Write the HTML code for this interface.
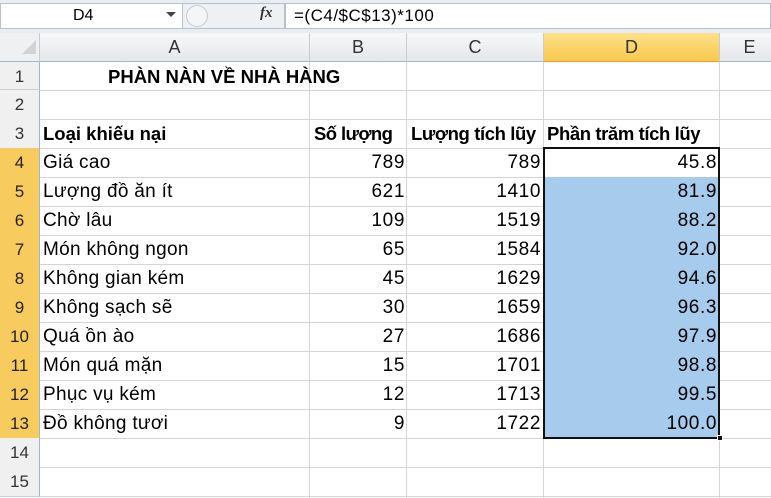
<!DOCTYPE html>
<html><head><meta charset="utf-8"><style>
*{margin:0;padding:0;box-sizing:border-box}
body{width:771px;height:498px;background:#fff;font-family:"Liberation Sans",sans-serif;position:relative;overflow:hidden}
.a{position:absolute}
.hl{position:absolute;left:0;width:771px;height:1px;background:#d4d4d4}
.vl{position:absolute;top:62px;height:436px;width:1px;background:#d4d4d4}
.t{position:absolute;font-size:19px;letter-spacing:0.3px;color:#000;line-height:30px;white-space:nowrap}
.b{font-weight:bold;font-size:18.5px;letter-spacing:0}
.r{text-align:right;letter-spacing:0.6px}
.rh{position:absolute;left:0;width:40px;text-align:center;font-size:17px;line-height:29px;color:#333;background:#f0f0f0;border-right:1px solid #9eb6ce;border-bottom:1px solid #c8d0d8}
.ch{position:absolute;top:33px;height:29px;line-height:28px;text-align:center;font-size:18px;color:#333;background:linear-gradient(#f7f8f9,#e4e7eb);border-right:1px solid #c8ccd1;border-bottom:1px solid #9eb6ce}
</style></head><body>
<div class="a" style="left:0;top:0;width:771px;height:33px;background:#e9ecf0"></div>
<div class="a" style="left:0;top:3px;width:183px;height:26px;background:#fff;border:1px solid #b8c0ca;font-size:16px;line-height:24px;padding-left:72px">D4</div>
<div class="a" style="left:166px;top:12px;width:0;height:0;border-left:5px solid transparent;border-right:5px solid transparent;border-top:5px solid #444"></div>
<div class="a" style="left:183px;top:3px;width:102px;height:26px;background:#eef0f3;border:1px solid #b8c0ca;border-left:none"></div>
<div class="a" style="left:186px;top:5px;width:22px;height:22px;border-radius:11px;border:1px solid #c5cad0;background:#f4f5f6"></div>
<div class="a" style="left:260px;top:5px;font-family:'Liberation Serif',serif;font-style:italic;font-weight:bold;font-size:15px;color:#333">fx</div>
<div class="a" style="left:285px;top:3px;width:486px;height:26px;background:#fff;border:1px solid #b8c0ca;font-size:17px;line-height:24px;padding-left:8px;letter-spacing:0.5px">=(C4/$C$13)*100</div>
<div class="a" style="left:0;top:33px;width:40px;height:29px;background:#eef0f2;border-right:1px solid #c8ccd1;border-bottom:1px solid #9eb6ce"></div>
<div class="a" style="left:22px;top:40px;width:0;height:0;border-left:14px solid transparent;border-bottom:14px solid #d0d4d8"></div>
<div class="ch" style="left:40px;width:270px">A</div>
<div class="ch" style="left:310px;width:97px">B</div>
<div class="ch" style="left:407px;width:137px">C</div>
<div class="ch" style="left:544px;width:176px;background:linear-gradient(#fde18a,#f8c94c);border-bottom-color:#e2a22d">D</div>
<div class="ch" style="left:720px;width:60px">E</div>
<div class="hl" style="top:90px"></div><div class="hl" style="top:119px"></div><div class="hl" style="top:148px"></div><div class="hl" style="top:177px"></div><div class="hl" style="top:206px"></div><div class="hl" style="top:235px"></div><div class="hl" style="top:264px"></div><div class="hl" style="top:293px"></div><div class="hl" style="top:322px"></div><div class="hl" style="top:351px"></div><div class="hl" style="top:380px"></div><div class="hl" style="top:409px"></div><div class="hl" style="top:438px"></div><div class="hl" style="top:467px"></div><div class="hl" style="top:496px"></div>
<div class="vl" style="left:309px"></div><div class="vl" style="left:406px"></div><div class="vl" style="left:543px"></div><div class="vl" style="left:719px"></div>
<div class="rh" style="top:62px;height:28px">1</div><div class="rh" style="top:90px">2</div><div class="rh" style="top:119px">3</div>
<div class="rh" style="top:148px;background:#f8cb5e;color:#222">4</div><div class="rh" style="top:177px;background:#f8cb5e;color:#222">5</div><div class="rh" style="top:206px;background:#f8cb5e;color:#222">6</div><div class="rh" style="top:235px;background:#f8cb5e;color:#222">7</div><div class="rh" style="top:264px;background:#f8cb5e;color:#222">8</div><div class="rh" style="top:293px;background:#f8cb5e;color:#222">9</div><div class="rh" style="top:322px;background:#f8cb5e;color:#222">10</div><div class="rh" style="top:351px;background:#f8cb5e;color:#222">11</div><div class="rh" style="top:380px;background:#f8cb5e;color:#222">12</div><div class="rh" style="top:409px;background:#f8cb5e;color:#222">13</div>
<div class="rh" style="top:438px">14</div><div class="rh" style="top:467px">15</div>
<div class="a" style="left:545px;top:177px;width:173px;height:261px;background:#a6cbec"></div>
<div class="a" style="left:543px;top:147px;width:177px;height:292px;border:2px solid #111"></div>
<div class="a" style="left:717px;top:435px;width:6px;height:6px;background:#111;border:1px solid #fff"></div>
<div class="t b" style="left:108px;top:62px">PHÀN NÀN VỀ NHÀ HÀNG</div>
<div class="t b" style="left:43px;top:119px">Loại khiếu nại</div>
<div class="t b" style="left:314px;top:119px;letter-spacing:-0.6px">Số lượng</div>
<div class="t b" style="left:411px;top:119px;letter-spacing:-0.4px">Lượng tích lũy</div>
<div class="t b" style="left:547px;top:119px;letter-spacing:-0.4px">Phần trăm tích lũy</div>
<div class="t" style="left:43px;top:148px">Giá cao</div>
<div class="t" style="left:43px;top:177px">Lượng đồ ăn ít</div>
<div class="t" style="left:43px;top:206px">Chờ lâu</div>
<div class="t" style="left:43px;top:235px">Món không ngon</div>
<div class="t" style="left:43px;top:264px">Không gian kém</div>
<div class="t" style="left:43px;top:293px">Không sạch sẽ</div>
<div class="t" style="left:43px;top:322px">Quá ồn ào</div>
<div class="t" style="left:43px;top:351px">Món quá mặn</div>
<div class="t" style="left:43px;top:380px">Phục vụ kém</div>
<div class="t" style="left:43px;top:409px">Đồ không tươi</div>
<div class="t r" style="right:366px;top:148px">789</div><div class="t r" style="right:366px;top:177px">621</div><div class="t r" style="right:366px;top:206px">109</div><div class="t r" style="right:366px;top:235px">65</div><div class="t r" style="right:366px;top:264px">45</div><div class="t r" style="right:366px;top:293px">30</div><div class="t r" style="right:366px;top:322px">27</div><div class="t r" style="right:366px;top:351px">15</div><div class="t r" style="right:366px;top:380px">12</div><div class="t r" style="right:366px;top:409px">9</div>
<div class="t r" style="right:230px;top:148px">789</div><div class="t r" style="right:230px;top:177px">1410</div><div class="t r" style="right:230px;top:206px">1519</div><div class="t r" style="right:230px;top:235px">1584</div><div class="t r" style="right:230px;top:264px">1629</div><div class="t r" style="right:230px;top:293px">1659</div><div class="t r" style="right:230px;top:322px">1686</div><div class="t r" style="right:230px;top:351px">1701</div><div class="t r" style="right:230px;top:380px">1713</div><div class="t r" style="right:230px;top:409px">1722</div>
<div class="t r" style="right:54px;top:148px">45.8</div><div class="t r" style="right:54px;top:177px">81.9</div><div class="t r" style="right:54px;top:206px">88.2</div><div class="t r" style="right:54px;top:235px">92.0</div><div class="t r" style="right:54px;top:264px">94.6</div><div class="t r" style="right:54px;top:293px">96.3</div><div class="t r" style="right:54px;top:322px">97.9</div><div class="t r" style="right:54px;top:351px">98.8</div><div class="t r" style="right:54px;top:380px">99.5</div><div class="t r" style="right:54px;top:409px">100.0</div>
</body></html>
